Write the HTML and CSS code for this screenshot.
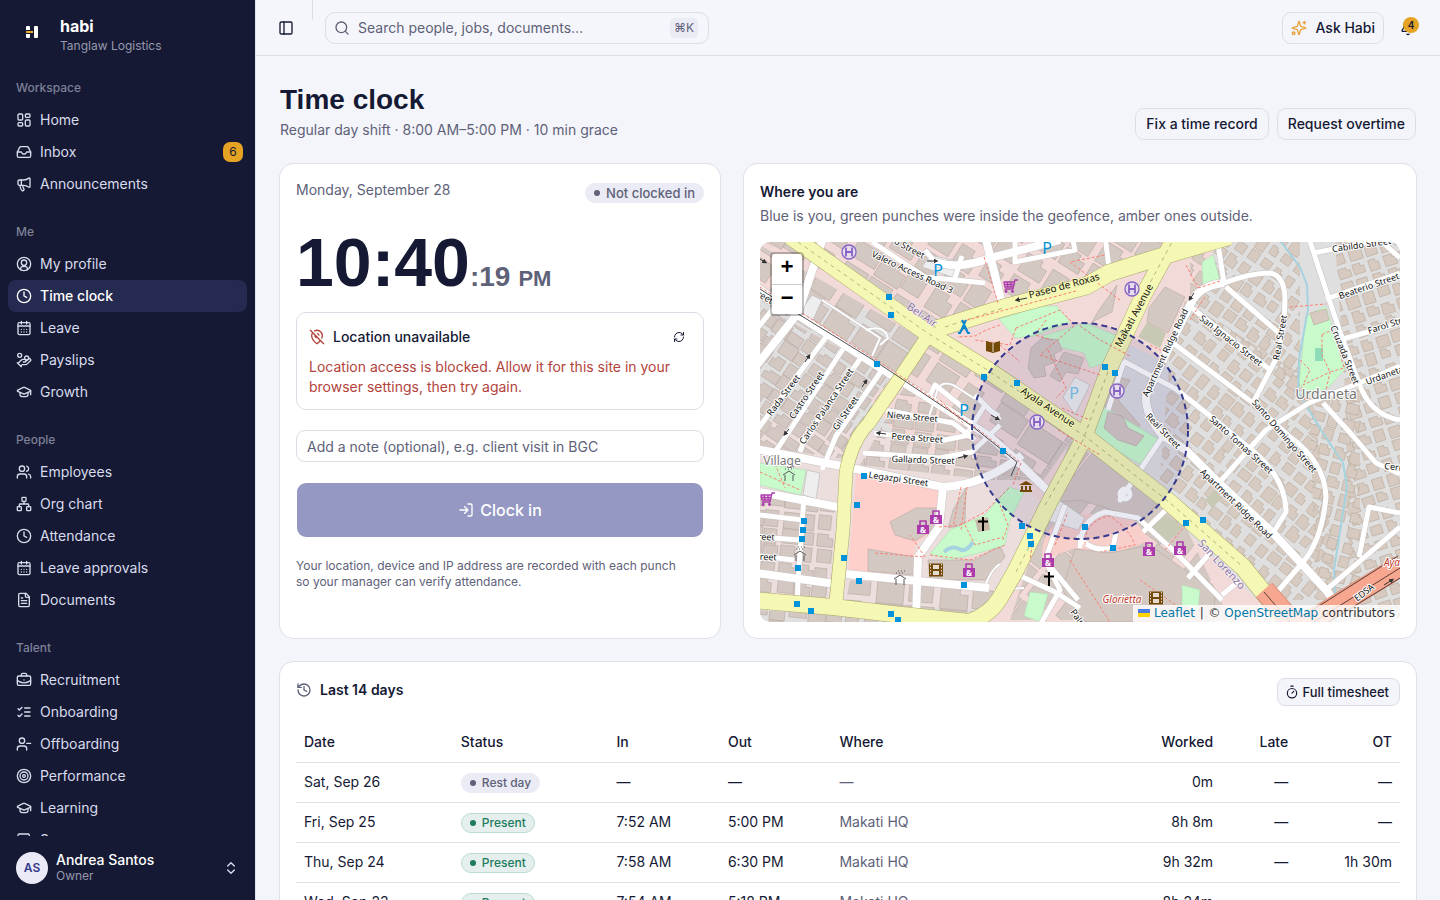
FILE: index.html
```html
<!DOCTYPE html>
<html lang="en">
<head>
<meta charset="utf-8">
<meta name="viewport" content="width=device-width, initial-scale=1">
<title>Time clock · habi</title>
<link rel="stylesheet" href="styles.css">
</head>
<body>
<svg class="sprite" aria-hidden="true">
  <symbol id="i-home" viewBox="0 0 24 24"><rect x="3" y="3" width="7" height="9" rx="1.5"/><rect x="14" y="3" width="7" height="5" rx="1.5"/><rect x="14" y="12" width="7" height="9" rx="1.5"/><rect x="3" y="16" width="7" height="5" rx="1.5"/></symbol>
  <symbol id="i-inbox" viewBox="0 0 24 24"><path d="M22 12h-6l-2 3h-4l-2-3H2"/><path d="M5.45 5.11 2 12v6a2 2 0 0 0 2 2h16a2 2 0 0 0 2-2v-6l-3.450-6.890A2 2 0 0 0 16.760 4H7.240a2 2 0 0 0-1.790 1.110z"/></symbol>
  <symbol id="i-mega" viewBox="0 0 24 24"><path d="M11 6a13 13 0 0 0 8.400-2.800A1 1 0 0 1 21 4v12a1 1 0 0 1-1.600.800A13 13 0 0 0 11 14H5a2 2 0 0 1-2-2V8a2 2 0 0 1 2-2z"/><path d="M6 14a12 12 0 0 0 2.400 7.200 2 2 0 0 0 3.200-2.400A8 8 0 0 1 10 14"/><path d="M8 6v8"/></symbol>
  <symbol id="i-user" viewBox="0 0 24 24"><circle cx="12" cy="12" r="10"/><circle cx="12" cy="10" r="4"/><path d="M7 20.600V19a3 3 0 0 1 3-3h4a3 3 0 0 1 3 3v1.600"/></symbol>
  <symbol id="i-clock" viewBox="0 0 24 24"><circle cx="12" cy="12" r="10"/><path d="M12 6v6l4 2"/></symbol>
  <symbol id="i-cal" viewBox="0 0 24 24"><path d="M8 2v4M16 2v4M3 9h18"/><rect x="3" y="4" width="18" height="18" rx="2"/><path d="M8 14h.01M12 14h.01M16 14h.01M8 18h.01M12 18h.01M16 18h.01"/></symbol>
  <symbol id="i-pay" viewBox="0 0 24 24"><circle cx="5.500" cy="5" r="3"/><circle cx="16" cy="9" r="3"/><path d="M11 15h2a2 2 0 1 0 0-4h-3c-.600 0-1.100.200-1.400.600L3 17M7 21l1.600-1.400c.300-.400.800-.600 1.400-.600h4c1.100 0 2.100-.400 2.800-1.200l4.600-4.400a2 2 0 0 0-2.750-2.910l-4.200 3.900M2 16l6 6"/></symbol>
  <symbol id="i-cap" viewBox="0 0 24 24"><path d="M21.420 10.920a1 1 0 0 0-.020-1.840L12.830 5.180a2 2 0 0 0-1.660 0L2.600 9.080a1 1 0 0 0 0 1.830l8.570 3.910a2 2 0 0 0 1.660 0z"/><path d="M22 10v6M6 12.500V16a6 3 0 0 0 12 0v-3.500"/></symbol>
  <symbol id="i-users" viewBox="0 0 24 24"><circle cx="9" cy="7" r="4"/><path d="M2 21v-2a4 4 0 0 1 4-4h6a4 4 0 0 1 4 4v2M16 3.130a4 4 0 0 1 0 7.750M22 21v-2a4 4 0 0 0-3-3.870"/></symbol>
  <symbol id="i-org" viewBox="0 0 24 24"><rect x="16" y="16" width="6" height="6" rx="1"/><rect x="2" y="16" width="6" height="6" rx="1"/><rect x="9" y="2" width="6" height="6" rx="1"/><path d="M5 16v-3a1 1 0 0 1 1-1h12a1 1 0 0 1 1 1v3M12 12V8"/></symbol>
  <symbol id="i-doc" viewBox="0 0 24 24"><path d="M15 2H6a2 2 0 0 0-2 2v16a2 2 0 0 0 2 2h12a2 2 0 0 0 2-2V7z"/><path d="M14 2v4a2 2 0 0 0 2 2h4M10 9H8M16 13H8M16 17H8"/></symbol>
  <symbol id="i-form" viewBox="0 0 24 24"><path d="M3 21V5a2 2 0 0 1 2-2h13a2 2 0 0 1 2 2v16z"/></symbol>
  <symbol id="i-case" viewBox="0 0 24 24"><path d="M12 12h.01M16 6V4a2 2 0 0 0-2-2h-4a2 2 0 0 0-2 2v2M22 13a18.150 18.150 0 0 1-20 0"/><rect x="2" y="6" width="20" height="14" rx="2"/></symbol>
  <symbol id="i-list" viewBox="0 0 24 24"><path d="m3 17 2 2 4-4M3 7l2 2 4-4M13 6h8M13 12h8M13 18h8"/></symbol>
  <symbol id="i-minus" viewBox="0 0 24 24"><circle cx="9" cy="7" r="4"/><path d="M2 21v-2a4 4 0 0 1 4-4h6a4 4 0 0 1 4 4v2M22 11h-6"/></symbol>
  <symbol id="i-target" viewBox="0 0 24 24"><circle cx="12" cy="12" r="10"/><circle cx="12" cy="12" r="6"/><circle cx="12" cy="12" r="2"/></symbol>
  <symbol id="i-updown" viewBox="0 0 24 24"><path d="m7 15 5 5 5-5M7 9l5-5 5 5"/></symbol>
  <symbol id="i-panel" viewBox="0 0 24 24"><rect x="3" y="3" width="18" height="18" rx="2"/><path d="M9 3v18"/></symbol>
  <symbol id="i-search" viewBox="0 0 24 24"><circle cx="11" cy="11" r="8"/><path d="m21 21-4.300-4.300"/></symbol>
  <symbol id="i-spark" viewBox="0 0 24 24"><path d="M9.940 15.500A2 2 0 0 0 8.500 14.060l-6.140-1.580a.5.5 0 0 1 0-.960L8.500 9.940A2 2 0 0 0 9.940 8.500l1.580-6.140a.5.5 0 0 1 .960 0L14.060 8.500A2 2 0 0 0 15.500 9.940l6.140 1.580a.5.5 0 0 1 0 .960L15.500 14.060a2 2 0 0 0-1.440 1.440l-1.580 6.140a.5.5 0 0 1-.960 0z"/><path d="M20 2v4M22 4h-4"/><circle cx="4" cy="20" r="2"/></symbol>
  <symbol id="i-bell" viewBox="0 0 24 24"><path d="M10.270 21a2 2 0 0 0 3.460 0M3.260 15.330A1 1 0 0 0 4 17h16a1 1 0 0 0 .740-1.670C19.410 13.960 18 12.500 18 8A6 6 0 0 0 6 8c0 4.500-1.410 5.960-2.740 7.330"/></symbol>
  <symbol id="i-pinoff" viewBox="0 0 24 24"><path d="M12.750 7.090a3 3 0 0 1 2.160 2.160M17.070 17.070c-1.630 2.170-3.530 4.020-4.470 4.730a1 1 0 0 1-1.200 0C9.540 20.190 4 14.990 4 10a8 8 0 0 1 1.430-4.570M2 2l20 20M8.470 2.820A8 8 0 0 1 20 10c0 1.180-.310 2.380-.810 3.530M9.130 9.130a3 3 0 0 0 3.740 3.740"/></symbol>
  <symbol id="i-refresh" viewBox="0 0 24 24"><path d="M3 12a9 9 0 0 1 9-9 9.750 9.750 0 0 1 6.740 2.740L21 8M21 3v5h-5M21 12a9 9 0 0 1-9 9 9.750 9.750 0 0 1-6.740-2.740L3 16M8 16H3v5"/></symbol>
  <symbol id="i-login" viewBox="0 0 24 24"><path d="m10 17 5-5-5-5M15 12H3M15 3h4a2 2 0 0 1 2 2v14a2 2 0 0 1-2 2h-4"/></symbol>
  <symbol id="i-history" viewBox="0 0 24 24"><path d="M3 12a9 9 0 1 0 9-9 9.750 9.750 0 0 0-6.740 2.740L3 8"/><path d="M3 3v5h5M12 7v5l4 2"/></symbol>
  <symbol id="i-timer" viewBox="0 0 24 24"><path d="M10 2h4M12 14l3-3"/><circle cx="12" cy="14" r="8"/></symbol>
</svg>
<div class="app">
  <aside class="sidebar">
    <div class="brand">
      <svg class="logo" viewBox="0 0 32 32" aria-hidden="true"><rect x="10" y="10" width="4" height="12" rx="1" fill="#fff"/><rect x="18" y="10" width="4" height="12" rx="1" fill="#fff"/><path d="M9 14h5v4H9z" fill="#151934"/><rect x="10" y="15" width="7" height="2" fill="#e9a823"/></svg>
      <div><div class="brand-name">habi</div><div class="brand-org">Tanglaw Logistics</div></div>
    </div>
    <nav class="nav" aria-label="Main">
      <section class="group"><h2>Workspace</h2>
        <a href="#"><svg><use href="#i-home"/></svg>Home</a>
        <a href="#"><svg><use href="#i-inbox"/></svg>Inbox<span class="count">6</span></a>
        <a href="#"><svg><use href="#i-mega"/></svg>Announcements</a></section>
      <section class="group"><h2>Me</h2>
        <a href="#"><svg><use href="#i-user"/></svg>My profile</a>
        <a href="#" class="active" aria-current="page"><svg><use href="#i-clock"/></svg>Time clock</a>
        <a href="#"><svg><use href="#i-cal"/></svg>Leave</a>
        <a href="#"><svg><use href="#i-pay"/></svg>Payslips</a>
        <a href="#"><svg><use href="#i-cap"/></svg>Growth</a></section>
      <section class="group"><h2>People</h2>
        <a href="#"><svg><use href="#i-users"/></svg>Employees</a>
        <a href="#"><svg><use href="#i-org"/></svg>Org chart</a>
        <a href="#"><svg><use href="#i-clock"/></svg>Attendance</a>
        <a href="#"><svg><use href="#i-cal"/></svg>Leave approvals</a>
        <a href="#"><svg><use href="#i-doc"/></svg>Documents</a></section>
      <section class="group"><h2>Talent</h2>
        <a href="#"><svg><use href="#i-case"/></svg>Recruitment</a>
        <a href="#"><svg><use href="#i-list"/></svg>Onboarding</a>
        <a href="#"><svg><use href="#i-minus"/></svg>Offboarding</a>
        <a href="#"><svg><use href="#i-target"/></svg>Performance</a>
        <a href="#"><svg><use href="#i-cap"/></svg>Learning</a>
        <a href="#"><svg><use href="#i-form"/></svg>Surveys</a></section>
    </nav>
    <button class="account" type="button">
      <span class="avatar">AS</span>
      <span class="who"><b>Andrea Santos</b><small>Owner</small></span>
      <svg><use href="#i-updown"/></svg>
    </button>
  </aside>

  <div class="page">
    <header class="topbar">
      <button class="icon-btn" type="button" aria-label="Toggle sidebar"><svg><use href="#i-panel"/></svg></button>
      <span class="divider"></span>
      <label class="search"><svg><use href="#i-search"/></svg><input type="search" aria-label="Search" placeholder="Search people, jobs, documents…"><kbd>⌘K</kbd></label>
      <button class="btn ask" type="button"><svg><use href="#i-spark"/></svg>Ask Habi</button>
      <button class="icon-btn bell" type="button" aria-label="Notifications"><svg><use href="#i-bell"/></svg><span class="dot-count">4</span></button>
    </header>

    <main class="content">
      <div class="heading">
        <div><h1>Time clock</h1><p>Regular day shift · 8:00 AM–5:00 PM · 10 min grace</p></div>
        <div class="actions"><button class="btn" type="button">Fix a time record</button><button class="btn" type="button">Request overtime</button></div>
      </div>

      <div class="columns">
        <section class="card punch">
          <div class="punch-top"><span>Monday, September 28</span><span class="pill">Not clocked in</span></div>
          <div class="clock">10:40<span class="sec">:19</span> <span class="ampm">PM</span></div>
          <div class="notice">
            <div class="notice-head"><svg class="red"><use href="#i-pinoff"/></svg><strong>Location unavailable</strong><button class="retry" type="button" aria-label="Retry"><svg><use href="#i-refresh"/></svg></button></div>
            <p>Location access is blocked. Allow it for this site in your browser settings, then try again.</p>
          </div>
          <input class="note" type="text" aria-label="Note" placeholder="Add a note (optional), e.g. client visit in BGC">
          <button class="clock-in" type="button" disabled><svg><use href="#i-login"/></svg>Clock in</button>
          <p class="fine">Your location, device and IP address are recorded with each punch so your manager can verify attendance.</p>
        </section>

        <section class="card where">
          <h2>Where you are</h2>
          <p>Blue is you, green punches were inside the geofence, amber ones outside.</p>
          <div class="map">
            <svg class="tiles" viewBox="760 242 640 380" preserveAspectRatio="xMidYMid slice" role="img" aria-label="Street map of Makati">
              <defs>
                <marker id="m-head" viewBox="0 0 6 6" refX="3" refY="3" markerWidth="5" markerHeight="5" orient="auto" markerUnits="userSpaceOnUse"><path d="M0 0 6 3 0 6z" fill="#333"/></marker>
                <g id="m-bus"><rect x="-3" y="-3" width="6" height="6" fill="#0092da"/></g>
                <g id="m-h"><circle r="7" fill="#e6dcec" stroke="#8461c4" stroke-width="1.300"/><path d="M-3-4.500v9M3-4.500v9M-3 0h6" stroke="#8461c4" stroke-width="1.800" fill="none"/></g>
                <g id="m-bag"><path d="M-6-2H6V7H-6z" fill="#ac39ac"/><path d="M-3-2v-4h6v4" stroke="#ac39ac" stroke-width="1.600" fill="none"/><text y="6" text-anchor="middle" class="amp">&amp;</text></g>
                <g id="m-cart" fill="none" stroke="#ac39ac" stroke-width="1.300"><path d="M7-6H4L2 3h-8M3.500-4H-7l1 5H3M-6-1.500H3M-4-4l1 5M0-4v5"/><circle cx="-5" cy="5.500" r=".8"/><circle cx="1.500" cy="5.500" r=".8"/></g>
                <g id="m-film"><rect x="-7" y="-6.500" width="14" height="13" fill="#734a08"/><path d="M-3-5h6v4h-6zM-3 1h6v4h-6z" fill="#e6dcd2"/><path d="M-5.500-6v12M5.500-6v12" stroke="#e6dcd2" stroke-dasharray="1.500 1.500"/></g>
                <g id="m-cross"><path d="M0-7V7M-5-2.500H5" stroke="#000" stroke-width="2" fill="none"/></g>
                <g id="m-hut"><path d="M-6-1 0-5 6-1M-4-1v6M4-1v6" stroke="#555" fill="none"/><path d="M-4-7h8M-2-9h8" stroke="#555" stroke-dasharray="1 2"/></g>
              </defs>
              <rect x="700" y="200" width="800" height="460" fill="#e0dfdf"/>
              <g class="retail">
                <path d="M700 200H1230L1200 290 1150 400 1090 440 870 310 700 290z"/>
                <path d="M930 337 1075 430 1010 590 870 400z"/>
                <path d="M1085 435 1280 622 980 640 1050 500z"/>
              </g>
              <path d="M760 420 870 430 1010 480 1040 500 990 610 760 600z" fill="#ecdedd"/>
              <path d="M856 473 939 487 938 527 915 545 917 575 848 573z" fill="#ffcfcb"/>
              <path d="M1130 345 1190 375 1190 430 1140 460 1110 400z" fill="#dcdbe0"/>
              <g id="buildings"></g>
              <path d="M1042 560Q1040 520 1080 514L1130 514 1150 540Q1110 560 1075 548z" fill="#f8cfcb"/>
              <g class="building">
                <path d="M1049 503 1070 480 1095 450 1160 500 1145 520 1080 500zM1090 405 1110 375 1130 380 1118 400 1140 425 1130 440 1100 425zM1075 549 1110 553 1150 545 1215 592 1214 622 1085 622 1062 590zM890 522 916 508 938 508 937 527 915 541 895 535zM868 549 915 557 913 575 868 571zM928 560 975 560 1000 545 1005 557 985 580 930 580z"/>
                <path d="M1149 308 1165 287 1185 297 1168 333 1147 322zM1099 310 1117 285 1112 312 1092 322zM953 510 966 488 965 525 948 528z"/>
              </g>
              <g class="green">
                <path d="M999 319 1040 306 1057 306 1070 322 1035 336 1015 338zM1042 336 1086 323 1120 337 1108 362 1090 368 1084 353 1050 345zM1097 403 1140 428 1160 440 1142 465 1090 436z"/>
                <path d="M1306 316 1326 306 1336 340 1345 369 1328 388 1303 396 1299 382zM760 463 806 470 801 495 760 485zM930 554 950 530 985 515 1009 487 1024 492 1010 520 1005 545 972 555 950 560zM1202 262 1213 255 1220 281 1203 287zM1030 592 1048 594 1040 622 1024 616zM1182 585 1200 590 1198 610 1182 605z"/>
              </g>
              <g fill="#c8c9b4"><path d="M1147 322 1166 333 1160 348 1138 337zM1150 530 1164 514 1183 527 1165 544zM1205 500 1215 490 1222 498 1212 508z"/></g>
              <path d="M1031 348 1042 338 1058 340 1062 350 1054 354 1056 362 1044 366 1046 376 1034 378 1028 368z" class="building"/>
              <path d="M1064 352 1084 358 1078 374 1066 372 1060 382 1050 376z" class="building"/>
              <path d="M1108 412 1122 416 1128 428 1144 436 1136 446 1118 440 1104 428z" class="building"/>
              <path d="M975 520 988 517 990 530 978 532z" fill="#c8b9aa"/><path d="M1315 348h8v13h-8z" fill="#8fdcb8"/>
              <path d="M1310 313 1326 309 1329 320 1314 325z" class="house tan"/>
              <path d="M944 552q8-7 15-3t14-7" class="water thick"/>
              <path d="M1281 242 1300 267 1307 285 1308 309 1299 359 1298 392 1323 433 1343 463 1347 487 1334 570 1336 622" class="water"/>

              <g class="parking"><path d="M922 267 930 255 962 262 955 278zM1063 397 1075 377 1090 385 1075 415zM1045 520 1056 498 1085 518 1078 530zM803 495 807 470 820 473 816 499zM798 315 812 295 822 300 812 322z"/></g>

              <g class="street-case" id="minor-case"></g>
              <g id="minor" class="street">
                <path class="wide" d="M823 238 798 313 756 366M756 287 799 316 877 366 989 436 1013 457 1047 490"/>
                <path d="M829 333 757 430M843 349 788 433 775 452M860 359 805 438 800 452M882 370 836 436 822 470M788 290 756 330M790 325 770 350"/>
                <path class="wide" d="M756 449 846 467 943 487Q985 485 1022 455M760 492 843 508M756 573 843 585M846 574 989 588M943 487 939 527 918 557 916 617"/>
                <path d="M760 515 803 520M760 537 800 540M760 556 794 560M804 496 798 582M798 582 797 606M879 409 953 423 975 440M874 433 940 441 969 435M863 453 940 458 972 452 1000 425M965 437 985 405"/>
                <path class="wide" d="M935 262Q960 270 990 258L1060 240M986 240 995 275 1002 304"/>
                <path d="M872 242 925 277 985 283M925 250 935 262M962 256 955 278M1015 242V262L1075 250 1072 236M1105 236 1110 275"/>
                <path class="wide" d="M1224 283Q1199 285 1190 305L1173 339 1146 396Q1145 415 1163 436L1186 450 1219 483 1273 533 1326 590 1345 615"/>
                <path d="M1217 238 1224 283Q1250 273 1270 273 1285 276 1285 300L1284 325 1276 359 1253 403M1226 287 1279 333M1192 308 1269 369M1173 343 1253 403 1289 436Q1325 462 1326 497 1322 540 1303 562L1273 597M1123 361 1176 389 1219 423 1260 457Q1286 483 1286 512L1273 533M1219 483 1266 430 1309 403 1359 383 1400 366M1309 238 1319 269 1339 329 1359 383Q1370 415 1400 420M1313 253 1380 240 1400 258M1326 299 1400 273M1343 339 1400 323M1323 403 1353 436 1376 463 1400 474M1400 513 1369 507 1359 557M1400 527 1326 590"/>
                <path d="M1124 361 1108 410M1163 436 1120 500 1122 490M1065 505 1045 560M1080 548Q1080 520 1105 512L1138 518 1175 552 1222 600M1078 535Q1090 553 1113 548L1116 532M1143 532 1170 506M1188 578 1210 553M1222 595 1240 580M1016 574 1055 592 1080 608M1078 600 1045 560 1060 590 1040 625M966 410 935 385 930 395M975 395 1000 420"/>
                <path class="thin" d="M822 300 880 338 872 356M866 330Q884 324 888 338L880 345M928 420 938 388Q944 380 955 386L1000 415M1024 588 994 590M984 590Q990 570 1000 564"/>
                <circle cx="1125" cy="494" r="5"/>
              </g>
              <g class="casing"><path d="M936 329 1003 308 1086 286 1109 273 1163 256 1230 236" class="m17"/><path d="M929 334 899 379 869 423Q852 440 846 472L843 530 836 602" class="m14"/><path d="M752 600 833 607 893 614 969 622Q990 615 1000 598L1016 570 1049 503 1083 440 1109 369 1143 296 1176 236" class="m16"/><path d="M790 236 889 306 929 334 989 371 1086 437 1169 502 1243 567 1292 628" class="m17"/></g>
              <g class="main-road"><path d="M936 329 1003 308 1086 286 1109 273 1163 256 1230 236" class="m17"/><path d="M929 334 899 379 869 423Q852 440 846 472L843 530 836 602" class="m14"/><path d="M752 600 833 607 893 614 969 622Q990 615 1000 598L1016 570 1049 503 1083 440 1109 369 1143 296 1176 236" class="m16"/><path d="M790 236 889 306 929 334 989 371 1086 437 1169 502 1243 567 1292 628" class="m17"/></g>
              <path class="dashes" d="M798 242 889 306 929 334 989 371 1086 437 1169 502 1243 567M945 327 1003 308M1045 505 1083 440 1109 369M1143 296 1172 242M1016 572 1030 545"/>
              <path d="M1264 590 1295 625M1300 628 1400 566" stroke="#d98f78" stroke-width="22" fill="none"/>
              <path d="M1264 590 1295 625M1300 628 1400 566" stroke="#f7a68f" stroke-width="20" fill="none"/>
              <path d="M1264 592 1290 622M1304 628 1400 568M1300 618 1398 556M1312 632 1400 578" stroke="#5e3e38" fill="none"/>
              <path class="rail" d="M760 289 800 315 878 363 905 381 972 426 1017 462 1011 476"/>
              <g class="foot">
                <path d="M760 287 800 312 878 361 905 379 975 427 1021 463 1013 485M984 257 998 303M1016 328 1060 310 1075 325 1040 355 1100 375M1000 325Q985 330 975 336L957 337M1016 328 1010 345 975 340M1046 320 1035 335 1052 340M1290 307 1326 304M1300 360 1310 370 1303 385 1330 372 1325 395 1305 400 1301 385M1322 335Q1335 325 1338 345L1344 368 1330 372 1322 355zM961 487 953 527M967 487 961 530M875 553 925 557 910 535M939 527 960 525 985 512 1010 487M1003 540 1008 525 1000 505M930 555 970 560 1005 545M965 525 975 545 1003 537M1085 545Q1085 520 1110 516 1130 530 1135 545L1100 552M1186 265 1198 288M1198 288 1220 281M1062 408 1090 420M1070 560 1110 622M760 472 800 490M775 464 785 488M1165 550 1185 526M1080 326 1100 340 1130 356M1120 300 1070 262 1105 255"/>
                <path d="M1076 291 960 322M1205 297 1190 320M1140 580 1200 622M1150 345 1165 352M1048 350 1066 388 1056 398M1058 430 1100 455M1055 545 1068 512M1000 345 1020 362M940 400 965 425M1033 540 1030 560"/>
              </g>

              <circle cx="1080" cy="431" r="108" fill="#2d3282" fill-opacity=".1" stroke="#343a8c" stroke-width="2" stroke-dasharray="6 4"/>

              <g class="labels">
                <g class="major">
                  <text transform="translate(1046 410) rotate(34)">Ayala Avenue</text>
                  <text transform="translate(1065 289) rotate(-15)">Paseo de Roxas</text>
                  <text transform="translate(1137 317) rotate(-62)">Makati Avenue</text>
                </g>
                <text transform="translate(1168 354) rotate(-65)">Apartment Ridge Road</text>
                <text transform="translate(1234 506) rotate(44)">Apartment Ridge Road</text>
                <text transform="translate(1229 343) rotate(38)">San Ignacio Street</text>
                <text transform="translate(1283 338) rotate(-80)">Real Street</text>
                <text transform="translate(1161 433) rotate(46)">Real Street</text>
                <text transform="translate(1342 356) rotate(68)">Cruzada Street</text>
                <text transform="translate(1370 289) rotate(-19)">Beaterio Street</text>
                <text transform="translate(1362 248) rotate(-8)">Cabildo Street</text>
                <g class="from-start">
                  <text transform="translate(1369 334) rotate(-18)">Farol Street</text>
                  <text transform="translate(1367 385) rotate(-20)">Urdaneta Street</text>
                  <text transform="translate(1384 469) rotate(6)">Cerrada</text>
                  <text transform="translate(1070 612) rotate(55)">Palm</text>
                </g>
                <text transform="translate(1282 438) rotate(49)">Santo Domingo Street</text>
                <text transform="translate(1239 447) rotate(42)">Santo Tomas Street</text>
                <text transform="translate(911 275) rotate(25)">Valero Access Road 3</text>
                <text transform="translate(908 251) rotate(28)">o Street</text>
                <text transform="translate(786 397) rotate(-53)">Rada Street</text>
                <text transform="translate(809 397) rotate(-56)">Castro Street</text>
                <text transform="translate(829 408) rotate(-56)">Carlos Palanca Street</text>
                <text transform="translate(848 415) rotate(-56)">Gil Street</text>
                <text transform="translate(912 420) rotate(5)">Nieva Street</text>
                <text transform="translate(917 441) rotate(4)">Perea Street</text>
                <text transform="translate(923 463) rotate(2)">Gallardo Street</text>
                <text transform="translate(898 482) rotate(8)">Legazpi Street</text>
                <text transform="translate(760 298) rotate(30)">Street</text>
                <text transform="translate(762 540) rotate(2)">Street</text>
                <text transform="translate(764 560) rotate(2)">Street</text>
                <text transform="translate(1366 595) rotate(-38)">EDSA</text>
                <g class="place"><text transform="translate(920 318) rotate(35)" class="quarter">Bel-Air</text><text transform="translate(1219 567) rotate(47)" class="quarter">San Lorenzo</text><text x="1326" y="399" class="big">Urdaneta</text><text x="782" y="465" class="village">Village</text></g>
                <g class="mall"><text x="1122" y="603">Glorietta</text><text x="1396" y="566">Ayala</text></g>
              </g>
              <g class="park-p"><text x="938" y="276">P</text><text x="1047" y="254">P</text><text x="964" y="416">P</text><text x="1074" y="399" opacity=".5">P</text></g>
              <path class="arrows" d="M927 261l9 0"/><path class="arrows" d="M1027 298l-10 2"/><path class="arrows" d="M805 362l4-6"/><path class="arrows" d="M862 387l4-6"/><path class="arrows" d="M789 429l-4 5"/><path class="arrows" d="M886 434l-8-1"/><path class="arrows" d="M958 458l8-2"/><path class="arrows" d="M991 415l7 4"/><path class="arrows" d="M1194 293l-4 6"/><path class="arrows" d="M1384 585l8-5"/><path class="arrows" d="M760 259l5 3"/>
              <path d="M962 320l6 13M966 320l-6 13M964 326l-4 7h-2M964 326l4 7h2" stroke="#0d86cc" stroke-width="2" fill="none"/>
              <path d="M986 341l7 2 7-2v10l-7 2-7-2z" fill="#734a08"/><path d="M993 343v9" stroke="#e9dccb"/>
              <g fill="#734a08"><path d="M1019 485l7-4 7 4zM1020 490h12v2h-12z"/><path d="M1021 486h2v4h-2zM1025 486h2v4h-2zM1029 486h2v4h-2z"/></g>
              <use href="#m-h" x="849" y="252"/><use href="#m-h" x="1132" y="289"/><use href="#m-h" x="1117" y="391"/><use href="#m-h" x="1037" y="422"/>
              <use href="#m-cart" x="1011" y="286"/><use href="#m-cart" x="768" y="499"/>
              <use href="#m-bag" x="936" y="517"/><use href="#m-bag" x="923" y="527"/><use href="#m-bag" x="969" y="570"/><use href="#m-bag" x="1048" y="560"/><use href="#m-bag" x="1149" y="549"/><use href="#m-bag" x="1180" y="548"/>
              <use href="#m-film" x="936" y="570"/><use href="#m-film" x="1156" y="598"/><use href="#m-cross" x="983" y="524"/><use href="#m-cross" x="1049" y="579"/>
              <use href="#m-hut" x="789" y="476"/><use href="#m-hut" x="800" y="556"/><use href="#m-hut" x="900" y="580"/>
              <g id="stops"></g>
            </svg>
            <div class="zoom"><button type="button" aria-label="Zoom in">+</button><button type="button" aria-label="Zoom out">−</button></div>
            <div class="credit"><svg viewBox="0 0 12 8" aria-hidden="true"><path fill="#4c7be1" d="M0 0h12v4H0z"/><path fill="#ffd500" d="M0 4h12v4H0z"/></svg> <a href="#">Leaflet</a> <span>|</span> © <a href="#">OpenStreetMap</a> contributors</div>
          </div>
        </section>
      </div>

      <section class="card history">
        <div class="history-head"><svg><use href="#i-history"/></svg><h2>Last 14 days</h2><button class="btn small" type="button"><svg><use href="#i-timer"/></svg>Full timesheet</button></div>
        <table>
          <colgroup><col class="c-date"><col class="c-status"><col class="c-in"><col class="c-in"><col class="c-where"><col class="c-worked"><col class="c-late"><col class="c-ot"></colgroup>
          <thead><tr><th>Date</th><th>Status</th><th>In</th><th>Out</th><th>Where</th><th class="num">Worked</th><th class="num">Late</th><th class="num">OT</th></tr></thead>
          <tbody>
            <tr><td>Sat, Sep 26</td><td><span class="pill">Rest day</span></td><td>—</td><td>—</td><td class="muted">—</td><td class="num">0m</td><td class="num">—</td><td class="num">—</td></tr>
            <tr><td>Fri, Sep 25</td><td><span class="pill ok">Present</span></td><td>7:52 AM</td><td>5:00 PM</td><td class="muted">Makati HQ</td><td class="num">8h 8m</td><td class="num">—</td><td class="num">—</td></tr>
            <tr><td>Thu, Sep 24</td><td><span class="pill ok">Present</span></td><td>7:58 AM</td><td>6:30 PM</td><td class="muted">Makati HQ</td><td class="num">9h 32m</td><td class="num">—</td><td class="num">1h 30m</td></tr>
            <tr><td>Wed, Sep 23</td><td><span class="pill ok">Present</span></td><td>7:54 AM</td><td>5:18 PM</td><td class="muted">Makati HQ</td><td class="num">8h 24m</td><td class="num">—</td><td class="num">—</td></tr>
          </tbody>
        </table>
      </section>
    </main>
  </div>
</div>
<script src="map.js"></script>
</body>
</html>
```
FILE: styles.css
```css
* { box-sizing: border-box; }
body { margin: 0; font-family: Inter, "Liberation Sans", sans-serif; font-size: 14px; line-height: 20px; color: #151934; background: #f4f5fa; }
h1, h2, p { margin: 0; }
button, input { font: inherit; color: inherit; }
a { color: inherit; text-decoration: none; }
svg { width: 16px; height: 16px; flex: none; fill: none; stroke: currentColor; stroke-width: 2; stroke-linecap: round; stroke-linejoin: round; }
.sprite { position: absolute; width: 0; height: 0; }
.app { display: flex; height: 100vh; overflow: hidden; }

.sidebar { width: 256px; flex: none; display: flex; flex-direction: column; background: #151934; color: #d9dcec; border-right: 1px solid #e3e4f2; }
.brand { display: flex; align-items: flex-start; gap: 12px; height: 64px; padding: 16px 16px 0; flex: none; }
.logo { width: 32px; height: 32px; stroke: none; }
.brand-name { font-size: 16px; font-weight: 700; color: #fff; }
.brand-org { font-size: 12px; color: #9799ac; }
.nav { flex: 1; min-height: 0; overflow: hidden; }
.group { padding: 8px; }
.group h2 { height: 32px; padding: 0 8px; font-size: 12px; line-height: 32px; font-weight: 500; color: #7e8197; }
.group a { display: flex; align-items: center; gap: 8px; height: 32px; padding: 0 8px; border-radius: 8px; }
.group .active { background: #252a50; color: #fff; font-weight: 500; }
.count { margin-left: auto; margin-right: -4px; width: 20px; height: 20px; border-radius: 7px; background: #e5a323; color: #151934; font-size: 12px; text-align: center; }
.account { display: flex; align-items: center; gap: 8px; height: 64px; padding: 0 16px; border: 0; background: none; text-align: left; flex: none; }
.account svg { margin-left: auto; color: #d9dcec; }
.avatar { width: 32px; height: 32px; border-radius: 50%; background: #eaebf6; color: #343a8c; font-size: 12px; line-height: 32px; font-weight: 600; text-align: center; }
.who b, .who small { display: block; font-size: 14px; line-height: 16px; font-weight: 500; color: #fff; }
.who small { font-size: 12px; font-weight: 400; color: #9799ac; }

.page { flex: 1; min-width: 0; display: flex; flex-direction: column; }
.topbar { display: flex; align-items: center; height: 56px; flex: none; padding: 0 18px 0 16px; border-bottom: 1px solid #dcdde5; background: #f5f6fb; }
.icon-btn { position: relative; display: grid; place-items: center; width: 28px; height: 28px; padding: 0; border: 0; background: none; }
.divider { width: 1px; height: 20px; margin: 0 12px; align-self: flex-start; background: #dcdde5; }
.search { display: flex; align-items: center; gap: 8px; width: 384px; height: 32px; padding: 0 10px 0 8px; border: 1px solid #dcdde5; border-radius: 10px; color: #5e6178; }
.search input { flex: 1; min-width: 0; padding: 0; border: 0; background: none; outline: 0; }
::placeholder { color: #5e6178; opacity: 1; }
.search kbd { height: 20px; padding: 0 4px; border-radius: 5px; background: #eaebf4; font: 12px/20px Inter, "DejaVu Sans", sans-serif; }
.btn { display: flex; align-items: center; gap: 8px; height: 32px; padding: 0 10px; border: 1px solid #dcdde8; border-radius: 9px; background: #f4f5fa; font-weight: 500; white-space: nowrap; }
.ask { margin-left: auto; margin-right: 10px; padding: 0 8px; }
.ask svg { color: #e9a13c; }
.dot-count { position: absolute; top: 3px; left: 9px; width: 16px; height: 16px; border-radius: 50%; background: #e5a323; font-size: 10px; line-height: 16px; font-weight: 600; }

.content { flex: 1; min-height: 0; overflow: hidden; padding: 24px; display: flex; flex-direction: column; gap: 24px; }
.heading { display: flex; justify-content: space-between; align-items: flex-end; flex: none; }
h1 { font-family: "Liberation Sans", sans-serif; font-size: 28px; line-height: 40px; font-weight: 700; }
.heading p { color: #5e6178; }
.actions { display: flex; gap: 8px; }
.columns { display: grid; grid-template-columns: 55fr 84fr; gap: 24px; flex: none; }
.card { min-width: 0; padding: 16px; border-radius: 14px; background: #fff; box-shadow: 0 0 0 1px #dfe0e8; }
.card h2 { font-size: 14px; line-height: 24px; font-weight: 600; }

.punch { display: flex; flex-direction: column; }
.punch-top { display: flex; justify-content: space-between; align-items: flex-start; height: 44px; color: #5e6178; }
.pill { display: inline-flex; align-items: center; gap: 6px; height: 20px; padding: 0 8px; border: 1px solid #eaebf4; border-radius: 10px; background: #eaebf4; color: #5e6178; font-size: 12px; font-weight: 500; line-height: 18px; vertical-align: middle; }
.pill::before { content: ""; width: 6px; height: 6px; border-radius: 50%; background: currentColor; }
.pill.ok { border-color: #bcdcd2; background: #e5f0ee; color: #1e7a5d; }
.punch-top .pill { margin-top: 3px; font-size: 13px; }
.clock { display: flex; align-items: baseline; height: 88px; font-family: "Liberation Sans", sans-serif; font-size: 68px; line-height: 76px; font-weight: 700; white-space: nowrap; }
.sec, .ampm { font-size: 28px; color: #5e6178; }
.ampm { margin-left: 8px; font-size: 22px; }
.notice { padding: 12px; border: 1px solid #dcdde5; border-radius: 10px; }
.notice-head { display: flex; align-items: center; gap: 8px; height: 24px; margin-bottom: 8px; }
.notice strong { font-weight: 500; }
.retry { margin-left: auto; width: 24px; height: 24px; padding: 0; border: 0; background: none; display: grid; place-items: center; }
.retry svg { width: 12px; height: 12px; }
.notice p, .red { color: #b3433c; }
.note { height: 32px; margin: 20px 0; padding: 0 10px; border: 1px solid #dcdde5; border-radius: 9px; background: #fff; }
.clock-in { display: flex; align-items: center; justify-content: center; gap: 6px; height: 56px; border: 1px solid transparent; border-radius: 10px; background: #9498c3; background-clip: padding-box; color: #fff; font-size: 16px; font-weight: 500; }
.fine { margin-top: 20px; padding-right: 16px; font-size: 12px; line-height: 16px; color: #5e6178; }

.where p { margin: 2px 0 16px; color: #5e6178; }
.map { position: relative; height: 380px; border-radius: 10px; overflow: hidden; }
.tiles { display: block; width: 100%; height: 100%; stroke: none; stroke-width: 1; stroke-linecap: butt; }
.zoom { position: absolute; top: 10px; left: 10px; border: 2px solid rgba(0, 0, 0, .25); border-radius: 4px; background: #fff; background-clip: padding-box; }
.zoom button { display: block; width: 30px; height: 30px; padding: 0; border: 0; background: none; color: #000; font: bold 22px/30px "Liberation Mono", monospace; }
.zoom button + button { border-top: 1px solid #ccc; }
.credit { position: absolute; right: 0; bottom: 0; padding: 0 5px; background: rgba(255, 255, 255, .8); color: #333; font: 12px/17px "DejaVu Sans", sans-serif; }
.credit span { margin: 0 1px; }
.credit svg { width: 12px; height: 8px; stroke: none; }
.credit a { color: #0078a8; }

.retail { fill: #f2dad9; }
.building, .house { fill: #d4c8c3; stroke: #bcaea7; stroke-width: .7; }
.house.tan { fill: #d7cbc1; stroke: #bdb0a4; }
.green { fill: #c8facc; stroke: #add9af; stroke-width: .5; }
.water { fill: none; stroke: #a5d3df; stroke-width: 2; }
.water.thick { stroke-width: 4; }
.parking { fill: #eee; stroke: #bbb; stroke-width: .7; }
.street, .street-case { fill: none; stroke: #fff; stroke-width: 5; stroke-linejoin: round; }
.street-case { stroke: #c9c3c3; stroke-width: 6; }
.street .wide { stroke-width: 8; }
.street .thin { stroke-width: 2; }
.street-case .wide { stroke-width: 9; }
.street-case .thin { stroke-width: 3; }
.casing, .main-road { fill: none; stroke: #aaa868; stroke-linejoin: round; }
.casing .m14 { stroke-width: 14; }
.casing .m16 { stroke-width: 17; }
.casing .m17 { stroke-width: 18; }
.main-road { stroke: #f5f8b4; }
.main-road .m14 { stroke-width: 13; }
.main-road .m16 { stroke-width: 16; }
.main-road .m17 { stroke-width: 17; }
.dashes { fill: none; stroke: #b3b77c; stroke-dasharray: 4 4; }
.rail { fill: none; stroke: #4c4c4c; stroke-width: 1; }
.foot { fill: none; stroke: #fa8072; stroke-width: 1; stroke-dasharray: 3 2; }
.labels text { font: 9px "Noto Sans", sans-serif; fill: #111; stroke: #fff; stroke-width: 2; paint-order: stroke; text-anchor: middle; }
.labels .major text { font-size: 10px; stroke: #f5f8b4; }
.labels .from-start text { text-anchor: start; }
.labels .place text { fill: #777; }
.labels .place .quarter { fill: #8a6da0; font-size: 11px; stroke-width: 1; }
.labels .place .big { font-size: 14px; }
.labels .place .village { font-size: 12px; }
.labels .mall text { fill: #c0392b; font-size: 10px; font-style: italic; }
.park-p text { font: 16px "Noto Sans", sans-serif; fill: #0092da; text-anchor: middle; }
.amp { font: bold 8px "Noto Sans", sans-serif; fill: #fff; }
.arrows { stroke: #333; stroke-width: 1; fill: none; marker-end: url(#m-head); }

.history { padding-bottom: 24px; flex: none; }
.history-head { display: flex; align-items: flex-start; gap: 8px; height: 28px; margin-bottom: 16px; }
.history-head > svg { margin-top: 4px; color: #5e6178; }
.small { height: 28px; margin-left: auto; gap: 4px; padding: 0 10px 0 7px; font-size: 13px; border-radius: 8px; }
.small svg { width: 14px; height: 14px; }
table { width: 100%; border-collapse: collapse; table-layout: fixed; }
th, td { height: 40px; padding: 0 8px; text-align: left; font-weight: 400; border-bottom: 1px solid #dfe0e6; white-space: nowrap; }
th { font-weight: 500; }
.num { text-align: right; }
.muted { color: #5e6178; }
.c-date { width: 14.2%; }
.c-status { width: 14.1%; }
.c-in { width: 10.1%; }
.c-where { width: 26.2%; }
.c-worked { width: 9.1%; }
.c-late { width: 6.8%; }
.c-ot { width: 9.4%; }
```
FILE: map.js
```js
const NS = 'http://www.w3.org/2000/svg';
const layer = document.getElementById('buildings');
let seed = 7;
const rnd = () => (seed = (seed * 16807) % 2147483647) / 2147483647;

// Fills a district polygon with rotated rows of building footprints.
function district(id, points, angle, w, h, gap, tan) {
  const clip = document.createElementNS(NS, 'clipPath');
  clip.id = 'd-' + id;
  const poly = document.createElementNS(NS, 'polygon');
  poly.setAttribute('points', points);
  clip.append(poly);
  const outer = document.createElementNS(NS, 'g');
  outer.setAttribute('clip-path', `url(#d-${id})`);
  const nums = points.split(/[ ,]+/).map(Number);
  const xs = nums.filter((n, i) => i % 2 === 0), ys = nums.filter((n, i) => i % 2);
  const cx = (Math.min(...xs) + Math.max(...xs)) / 2, cy = (Math.min(...ys) + Math.max(...ys)) / 2;
  const r = Math.hypot(Math.max(...xs) - cx, Math.max(...ys) - cy);
  let d = '';
  for (let y = -r; y < r; y += h + gap) {
    for (let x = -r; x < r; x += w + gap) {
      const bw = w * (.75 + rnd() * .35), bh = h * (.75 + rnd() * .35);
      const px = x + rnd() * 2, py = y + rnd() * 2, c = rnd() > .5 ? 0.3 : 0;
      d += `M${px.toFixed(1)} ${py.toFixed(1)}h${(bw * (1 - c)).toFixed(1)}v${(bh * c).toFixed(1)}h${(bw * c).toFixed(1)}v${(bh * (1 - c)).toFixed(1)}h${(-bw).toFixed(1)}z`;
    }
  }
  const path = document.createElementNS(NS, 'path');
  path.setAttribute('d', d);
  path.setAttribute('class', tan ? 'house tan' : 'house');
  path.setAttribute('transform', `translate(${cx} ${cy}) rotate(${angle})`);
  outer.append(path);
  layer.append(clip, outer);
}
district('nw', '740,230 1200,230 1150,270 935,325', 32, 26, 22, 4);
district('wedge', '760,245 925,340 895,380 760,300', 33, 30, 24, 2);
district('rows', '750,300 890,375 850,460 750,445', -56, 13, 16, 2);
district('legazpi', '905,385 1040,480 990,480 860,465', 8, 20, 13, 2);
district('ayala', '930,345 1075,435 1040,485 905,380', 33, 34, 28, 3);
district('sw', '750,495 840,508 836,600 750,596', 6, 16, 15, 2);
district('south', '750,610 990,622 990,640 750,640', 6, 16, 15, 3);
district('mid', '850,580 1000,590 980,615 845,605', 5, 30, 20, 2);
district('core', '1070,440 1180,515 1230,620 1010,620', 38, 34, 30, 2);
district('ridge', '1185,300 1310,380 1340,600 1280,600 1160,480 1170,350', 38, 11, 12, 4, true);
district('real', '1190,242 1300,242 1300,400 1190,300', 35, 11, 12, 4, true);
district('east', '1335,240 1410,240 1410,620 1350,620 1345,390', -18, 12, 11, 4, true);
district('canal', '1310,400 1360,390 1360,600 1315,590', 15, 12, 11, 4, true);

const minor = document.getElementById('minor');
document.getElementById('minor-case').innerHTML = minor.innerHTML;

// Bus stops, as map coordinates.
const stops = [[889,297],[891,315],[877,364],[984,377],[1017,383],[1105,367],[1115,373],[1003,451],[864,476],[857,505],[804,521],[803,530],[802,539],[798,568],[844,558],[859,581],[964,585],[797,604],[811,611],[891,614],[898,620],[1022,526],[1030,536],[1031,544],[1085,527],[1113,548],[1186,523],[1203,520]];
document.getElementById('stops').innerHTML = stops.map(([x, y]) => `<use href="#m-bus" x="${x}" y="${y}"/>`).join('');
```
